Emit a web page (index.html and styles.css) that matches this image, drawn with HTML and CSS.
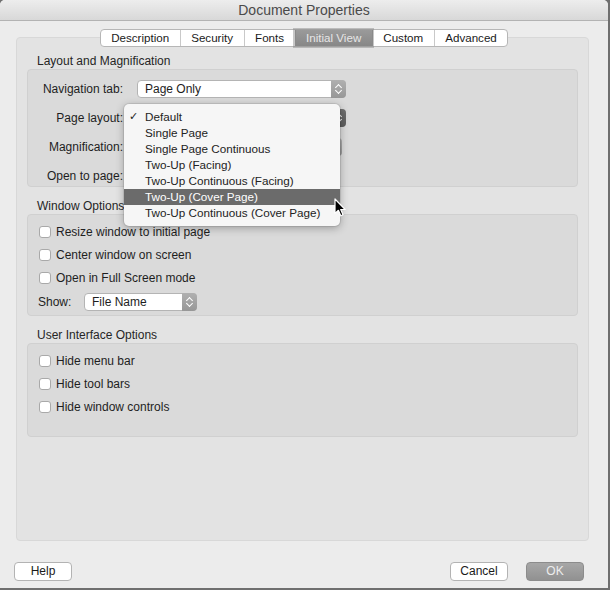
FILE: index.html
```html
<!DOCTYPE html>
<html>
<head lang="en">
    <meta charset="UTF-8">
    <title>Document Properties</title>
    <link rel="stylesheet" href="styles.css">
</head>
<body>
<div class="window">
    <div class="titlebar">Document Properties</div>

    <div class="tabs">
        <span class="tab">Description</span>
        <span class="tab">Security</span>
        <span class="tab">Fonts</span>
        <span class="tab current">Initial View</span>
        <span class="tab">Custom</span>
        <span class="tab">Advanced</span>
    </div>

    <div class="panel">
        <div class="group">
            <div class="group-title">Layout and Magnification</div>
            <div class="group-box layout">
                <label>Navigation tab:</label>
                <div class="popup nav"><span>Page Only</span><i class="stepper"></i></div>
                <label>Page layout:</label>
                <div class="popup nav"><i class="stepper pressed"></i></div>
                <label>Magnification:</label>
                <div class="popup zoom"><i class="stepper"></i></div>
                <label>Open to page:</label>
                <div class="field"></div>
            </div>
        </div>

        <div class="group">
            <div class="group-title">Window Options</div>
            <div class="group-box window-opts">
                <div class="check"><span class="box"></span>Resize window to initial page</div>
                <div class="check"><span class="box"></span>Center window on screen</div>
                <div class="check"><span class="box"></span>Open in Full Screen mode</div>
                <div class="show-row">
                    <label>Show:</label>
                    <div class="popup show"><span>File Name</span><i class="stepper"></i></div>
                </div>
            </div>
        </div>

        <div class="group">
            <div class="group-title">User Interface Options</div>
            <div class="group-box ui-opts">
                <div class="check"><span class="box"></span>Hide menu bar</div>
                <div class="check"><span class="box"></span>Hide tool bars</div>
                <div class="check"><span class="box"></span>Hide window controls</div>
            </div>
        </div>
    </div>

    <div class="buttons">
        <span class="btn">Help</span>
        <span class="spacer"></span>
        <span class="btn">Cancel</span>
        <span class="btn default">OK</span>
    </div>

    <!-- open pop-up menu of the page layout field -->
    <ul class="menu">
        <li class="checked">Default</li>
        <li>Single Page</li>
        <li>Single Page Continuous</li>
        <li>Two-Up (Facing)</li>
        <li>Two-Up Continuous (Facing)</li>
        <li class="hover">Two-Up (Cover Page)</li>
        <li>Two-Up Continuous (Cover Page)</li>
    </ul>

    <svg class="cursor" width="13" height="20" viewBox="0 0 13 20">
        <path d="M1 1 L1 15.5 L4.4 12.3 L6.8 17.8 L9 16.8 L6.7 11.5 L11.2 11.5 Z" fill="#000" stroke="#fff" stroke-width="1.2" stroke-linejoin="round"/>
    </svg>
</div>
</body>
</html>
```

FILE: styles.css
```css
* {
    padding: 0;
    margin: 0;
    list-style: none;
    box-sizing: border-box;
}

body {
    background: #6f6f6f;
    font-family: "Liberation Sans", Arial, sans-serif;
    font-size: 12px;
    color: #1e1e1e;
}

.window {
    position: relative;
    width: 608px;
    height: 588px;
    background: #ececec;
    border-radius: 5px 5px 0 0;
    overflow: hidden;
    display: flex;
    flex-direction: column;
}

.titlebar {
    height: 21px;
    line-height: 20px;
    text-align: center;
    font-size: 14px;
    color: #4a4a4a;
    background: linear-gradient(#ededed, #d8d8d8);
    border-bottom: 1px solid #b3b3b3;
}

/* segmented tab control */
.tabs {
    align-self: center;
    display: flex;
    height: 18px;
    margin-top: 8px;
    background: #fff;
    border: 1px solid #b6b6b6;
    border-radius: 4px;
    position: relative;
    z-index: 1;
    font-size: 11.6px;
}

.tab {
    padding: 0 10.5px;
    line-height: 16px;
    border-left: 1px solid #c9c9c9;
    color: #1a1a1a;
}

.tab:first-child {
    border-left: 0;
}

.tab.current {
    background: linear-gradient(#9a9a9a, #878787);
    color: #e6e6e6;
    border-left-color: #8a8a8a;
    box-shadow: 0 0 0 2px rgba(130, 130, 130, 0.45);
}

.tab.current + .tab {
    border-left-color: #8a8a8a;
}

.panel {
    margin: -10px 0 0 16px;
    width: 573px;
    height: 504px;
    padding: 15px 10px 0;
    background: #e3e3e3;
    border: 1px solid #d8d8d8;
    border-radius: 4px;
}

.group + .group {
    margin-top: 11px;
}

.group-title {
    height: 16px;
    line-height: 16px;
    padding-left: 10px;
    color: #262626;
}

.group-box {
    background: #dadada;
    border: 1px solid #d0d0d0;
    border-radius: 4px;
}

/* label / control grid */
.layout {
    height: 118px;
    padding-top: 10px;
    display: grid;
    grid-template-columns: 95px 209px;
    grid-auto-rows: 18px;
    column-gap: 14px;
    row-gap: 11px;
}

.layout label {
    text-align: right;
    line-height: 18px;
}

.popup {
    position: relative;
    height: 18px;
    line-height: 16px;
    padding-left: 7px;
    background: #fff;
    border: 1px solid #b4b4b4;
    border-radius: 4px;
}

.popup.zoom {
    width: 205px;
}

.field {
    width: 60px;
    height: 20px;
    background: #fff;
    border: 1px solid #b4b4b4;
}

.stepper {
    position: absolute;
    top: -1px;
    right: -1px;
    width: 15px;
    height: 18px;
    border-radius: 0 4px 4px 0;
    background: linear-gradient(#b0b0b0, #979797);
}

.stepper.pressed {
    background: linear-gradient(#707070, #5c5c5c);
}

/* up / down chevrons */
.stepper::before,
.stepper::after {
    content: "";
    position: absolute;
    left: 5px;
    width: 4px;
    height: 4px;
    border: solid #fff;
    border-width: 1.3px 1.3px 0 0;
}

.stepper::before {
    top: 5px;
    transform: rotate(-45deg);
}

.stepper::after {
    top: 8px;
    transform: rotate(135deg);
}

.window-opts {
    height: 102px;
    padding: 10px 0 0 10px;
}

.ui-opts {
    height: 94px;
    padding: 10px 0 0 10px;
}

.check {
    display: flex;
    align-items: center;
    height: 14px;
    margin-bottom: 9px;
}

.check .box {
    width: 12px;
    height: 12px;
    margin: 0 5px 0 1px;
    background: #fff;
    border: 1px solid #a9a9a9;
    border-radius: 3px;
}

.show-row {
    display: flex;
    align-items: center;
    margin-top: -1px;
}

.show-row label {
    width: 46px;
}

.popup.show {
    width: 113px;
}

.buttons {
    display: flex;
    gap: 18px;
    margin-top: 21px;
    padding: 0 24px 0 14px;
}

.spacer {
    flex: 1;
}

.btn {
    width: 58px;
    height: 19px;
    line-height: 17px;
    text-align: center;
    background: #fff;
    border: 1px solid #b3b3b3;
    border-radius: 4px;
    color: #1a1a1a;
}

.btn.default {
    background: linear-gradient(#a7a7a7, #919191);
    border-color: #8c8c8c;
    color: #ededed;
}

.menu {
    position: absolute;
    left: 124px;
    top: 104px;
    width: 216px;
    padding: 5px 0 5px;
    background: #f6f6f6;
    border-radius: 5px;
    box-shadow: 0 2px 8px rgba(0, 0, 0, 0.3), 0 0 0 1px rgba(0, 0, 0, 0.08);
    font-size: 11.7px;
    z-index: 2;
}

.menu li {
    position: relative;
    height: 16px;
    line-height: 16px;
    padding-left: 21px;
    color: #232323;
}

.menu li.checked::before {
    content: "\2713";
    position: absolute;
    left: 5px;
    font-family: "DejaVu Sans", sans-serif;
    font-size: 11px;
}

.menu li.hover {
    background: #6b6b6b;
    color: #fff;
}

.cursor {
    position: absolute;
    left: 334px;
    top: 198px;
    z-index: 3;
}
```
